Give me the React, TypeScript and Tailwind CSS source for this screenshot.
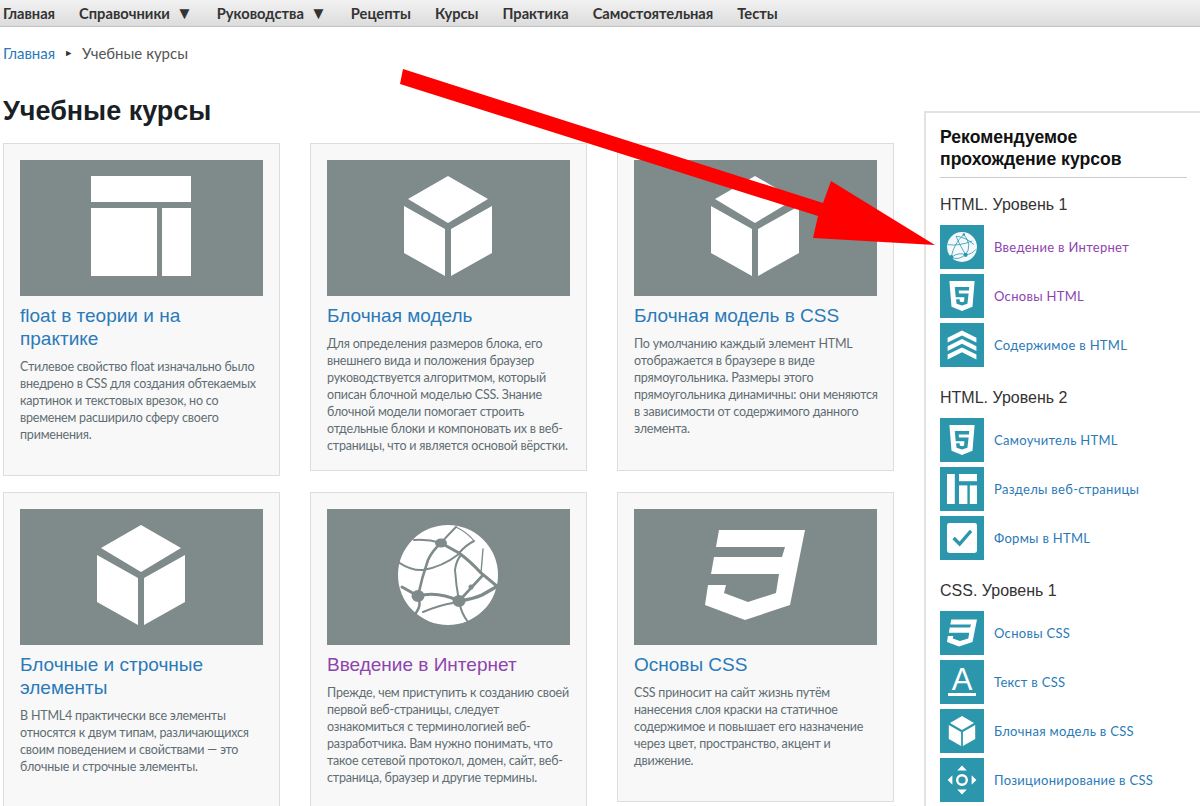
import type { ReactNode } from "react"

const pt = "font-['Lato',sans-serif]"

function Layout() {
  return (
    <svg viewBox="0 0 100 100" className="w-full h-full" fill="#fff">
      <rect x="0" y="0" width="100" height="26" />
      <rect x="0" y="32" width="66" height="68" />
      <rect x="71" y="32" width="29" height="68" />
    </svg>
  )
}

function Cube() {
  return (
    <svg viewBox="0 0 100 100" className="w-full h-full" fill="#fff">
      <polygon points="50,0 90,23 50,47 10,23" />
      <polygon points="6,30 47,53 47,100 6,77" />
      <polygon points="94,30 53,53 53,100 94,77" />
    </svg>
  )
}

function Globe() {
  return (
    <svg viewBox="0 0 100 100" className="w-full h-full">
      <circle cx="50" cy="50" r="50" fill="#fff" />
      <g fill="none" stroke="currentColor" strokeWidth="2" strokeLinecap="round">
        <path d="M16 15 Q30 14 43 18 Q50 10 58 2" />
        <path d="M58 2 Q70 8 76 16" strokeWidth="1.2" />
        <path d="M43 18 L61 28 Q72 36 83 48 L100 62" strokeWidth="3" />
        <path d="M76 16 Q68 20 61 28" />
        <path d="M43 18 Q34 26 30 35 Q24 52 20 71" strokeWidth="2.6" />
        <path d="M0 37 Q14 46 25 45 Q44 42 61 29" />
        <path d="M20 71 L4 62" strokeWidth="3" />
        <path d="M20 71 Q24 80 18 88" strokeWidth="2.6" />
        <path d="M20 71 Q40 66 61 76" strokeWidth="3" />
        <path d="M61 76 Q63 88 70 97" />
        <path d="M61 76 Q75 74 84 70 L98 62" strokeWidth="3.4" />
        <path d="M61 76 Q58 60 57 45 Q58 36 63 30" />
        <path d="M61 76 Q72 64 85 50" strokeWidth="2.6" />
        <path d="M25 87 Q42 80 55 78" />
        <path d="M85 24 Q84 36 83 48" strokeWidth="1.4" />
      </g>
      <g fill="currentColor">
        <ellipse cx="43" cy="18" rx="6" ry="4.5" />
        <ellipse cx="20" cy="71" rx="6.5" ry="6" />
        <ellipse cx="61" cy="76" rx="6.5" ry="6" />
        <circle cx="73" cy="62" r="2.5" />
      </g>
    </svg>
  )
}

function NetGlobe() {
  return (
    <svg viewBox="0 0 100 100" className="w-full h-full">
      <circle cx="50" cy="50" r="50" fill="#fff" fillOpacity="0.95" />
      <g fill="none" stroke="currentColor" strokeWidth="2.6">
        <path d="M14 84 Q22 40 56 8" />
        <path d="M56 8 Q86 44 62 76" />
        <path d="M14 84 Q40 66 62 76 Q84 74 96 58" />
        <path d="M2 42 Q40 48 84 30" />
        <path d="M30 14 Q60 16 90 42" />
        <path d="M62 76 Q40 40 30 14" />
        <path d="M14 84 Q36 96 62 76" />
      </g>
      <g fill="currentColor">
        <circle cx="14" cy="84" r="7" />
        <circle cx="62" cy="76" r="7" />
        <circle cx="56" cy="8" r="4" />
      </g>
    </svg>
  )
}

function Html5() {
  return (
    <svg viewBox="0 0 100 100" className="w-full h-full">
      <path
        fill="#fff"
        fillRule="evenodd"
        d="M8 0H92L85 86L50 100L15 86ZM26 20L29 54H58L57 68L50 71L43 68L42 61H30L32 76L50 82L68 76L72 42H40L39 32H73L74 20Z"
      />
    </svg>
  )
}

function Css3() {
  return (
    <svg viewBox="0 0 100 100" className="w-full h-full" fill="#fff">
      <polygon points="14,5 100,5 85,80 40,95 0,80 3,60 21,60 19,68 43,77 71,68 74,49 6,49 9,32 77,32 80,22 11,22" />
    </svg>
  )
}

function Chevrons() {
  return (
    <svg viewBox="0 0 100 100" className="w-full h-full" fill="#fff">
      <polygon points="50,2 98,26 98,42 50,18 2,42 2,26" />
      <polygon points="50,30 98,54 98,70 50,46 2,70 2,54" />
      <polygon points="50,58 98,82 98,98 50,74 2,98 2,82" />
    </svg>
  )
}

function Sections() {
  return (
    <svg viewBox="0 0 100 100" className="w-full h-full" fill="#fff">
      <rect x="0" y="0" width="26" height="100" />
      <rect x="40" y="0" width="60" height="24" />
      <rect x="40" y="38" width="28" height="62" />
      <rect x="76" y="38" width="24" height="62" />
    </svg>
  )
}

function CheckBox() {
  return (
    <svg viewBox="0 0 100 100" className="w-full h-full">
      <rect x="0" y="0" width="100" height="100" rx="8" fill="#fff" />
      <path d="M22 50L42 70L80 26" fill="none" stroke="currentColor" strokeWidth="11" />
    </svg>
  )
}

function TextIcon() {
  return (
    <div className="w-full h-full flex flex-col items-center">
      <span className="h-[26px] leading-[26px] text-[31px] text-white font-['Liberation_Sans',sans-serif]">A</span>
      <div className="w-[28px] h-[3px] bg-white" />
    </div>
  )
}

function Position() {
  return (
    <svg viewBox="0 0 100 100" className="w-full h-full" fill="#fff">
      <polygon points="50,2 66,18 34,18" />
      <polygon points="50,98 66,82 34,82" />
      <polygon points="2,50 18,34 18,66" />
      <polygon points="98,50 82,34 82,66" />
      <circle cx="50" cy="50" r="16" fill="none" stroke="#fff" strokeWidth="8" />
    </svg>
  )
}

type Course = {
  title: string
  text: string
  icon: ReactNode
  cls: string
  visited?: boolean
}

const rows: Course[][] = [
  [
    {
      title: "float в теории и на\nпрактике",
      text: "Стилевое свойство float изначально было\nвнедрено в CSS для создания обтекаемых\nкартинок и текстовых врезок, но со\nвременем расширило сферу своего\nприменения.",
      icon: <Layout />,
      cls: "h-[333px]",
    },
    {
      title: "Блочная модель",
      text: "Для определения размеров блока, его\nвнешнего вида и положения браузер\nруководствуется алгоритмом, который\nописан блочной моделью CSS. Знание\nблочной модели помогает строить\nотдельные блоки и компоновать их в веб-\nстраницы, что и является основой вёрстки.",
      icon: <Cube />,
      cls: "h-[328px]",
    },
    {
      title: "Блочная модель в CSS",
      text: "По умолчанию каждый элемент HTML\nотображается в браузере в виде\nпрямоугольника. Размеры этого\nпрямоугольника динамичны: они меняются\nв зависимости от содержимого данного\nэлемента.",
      icon: <Cube />,
      cls: "h-[328px]",
    },
  ],
  [
    {
      title: "Блочные и строчные\nэлементы",
      text: "В HTML4 практически все элементы\nотносятся к двум типам, различающихся\nсвоим поведением и свойствами — это\nблочные и строчные элементы.",
      icon: <Cube />,
      cls: "h-[340px]",
    },
    {
      title: "Введение в Интернет",
      text: "Прежде, чем приступить к созданию своей\nпервой веб-страницы, следует\nознакомиться с терминологией веб-\nразработчика. Вам нужно понимать, что\nтакое сетевой протокол, домен, сайт, веб-\nстраница, браузер и другие термины.",
      icon: <Globe />,
      cls: "h-[340px]",
      visited: true,
    },
    {
      title: "Основы CSS",
      text: "CSS приносит на сайт жизнь путём\nнанесения слоя краски на статичное\nсодержимое и повышает его назначение\nчерез цвет, пространство, акцент и\nдвижение.",
      icon: <Css3 />,
      cls: "h-[310px]",
    },
  ],
]

const groups = [
  {
    name: "HTML. Уровень 1",
    items: [
      { label: "Введение в Интернет", icon: <NetGlobe />, visited: true },
      { label: "Основы HTML", icon: <Html5 />, visited: true },
      { label: "Содержимое в HTML", icon: <Chevrons /> },
    ],
  },
  {
    name: "HTML. Уровень 2",
    items: [
      { label: "Самоучитель HTML", icon: <Html5 /> },
      { label: "Разделы веб-страницы", icon: <Sections /> },
      { label: "Формы в HTML", icon: <CheckBox /> },
    ],
  },
  {
    name: "CSS. Уровень 1",
    items: [
      { label: "Основы CSS", icon: <Css3 /> },
      { label: "Текст в CSS", icon: <TextIcon /> },
      { label: "Блочная модель в CSS", icon: <Cube /> },
      { label: "Позиционирование в CSS", icon: <Position /> },
    ],
  },
]

function Card({ course }: { course: Course }) {
  return (
    <a className={`block w-[277px] shrink-0 border border-[#ddd] bg-[#f8f8f8] px-4 pt-4 ${course.cls}`}>
      <div className="h-[136px] pb-[4px] pr-[1px] bg-[#7f8a8a] text-[#7f8a8a] flex items-center justify-center">
        <div className="w-[100px] h-[100px]">{course.icon}</div>
      </div>
      <h3
        className={`mt-2 text-[19px] leading-[23px] whitespace-pre-line font-['Liberation_Sans',sans-serif] ${
          course.visited ? "text-[#8e44ad]" : "text-[#2a7ab8]"
        }`}
      >
        {course.title}
      </h3>
      <p className={`mt-2 text-[12.5px] tracking-[-0.2px] leading-[17px] text-[#5f6d73] whitespace-pre ${pt}`}>
        {course.text}
      </p>
    </a>
  )
}

function Caret() {
  return <span className="ml-[6px] text-[17px] leading-none text-[#333]">▼</span>
}

export default function App() {
  return (
    <div className="relative w-[1200px] h-[806px] overflow-hidden bg-white">
      <nav
        className={`h-[27px] pl-[3px] flex items-center gap-6 bg-gradient-to-b from-[#f2f2f2] to-[#dcdcdc] border-b border-[#c4c4c4] text-[14.7px] font-bold text-[#333] ${pt}`}
      >
        <a>Главная</a>
        <a className="flex items-center">
          Справочники
          <Caret />
        </a>
        <a className="flex items-center">
          Руководства
          <Caret />
        </a>
        <a>Рецепты</a>
        <a>Курсы</a>
        <a>Практика</a>
        <a>Самостоятельная</a>
        <a>Тесты</a>
      </nav>

      <div className="flex items-start">
        <main className="w-[924px] shrink-0 pl-[3px]">
          <div className={`mt-[17px] h-[18px] flex items-center text-[15px] text-[#555] ${pt}`}>
            <a className="text-[#2a7ab8]">Главная</a>
            <span className="ml-[9px] mr-[9px] text-[9px] text-[#333]">►</span>
            <span>Учебные курсы</span>
          </div>
          <h1 className="mt-[31px] h-[36px] leading-[36px] text-[27px] font-bold text-[#1a1f26] font-['Liberation_Sans',sans-serif]">
            Учебные курсы
          </h1>
          <div className="mt-[14px] flex flex-col gap-[16px]">
            {rows.map((row, i) => (
              <div key={i} className="flex items-start gap-[30px]">
                {row.map((c) => (
                  <Card key={c.title} course={c} />
                ))}
              </div>
            ))}
          </div>
        </main>

        <aside className="mt-[84px] flex-1 h-[800px] border-l-2 border-t-2 border-[#e2e2e2] pl-[14px] pr-[13px] pt-[13px]">
          <h2 className="text-[17.6px] leading-[22px] font-bold text-[#111] pb-[7px] border-b border-[#ccc] font-['Liberation_Sans',sans-serif]">
            Рекомендуемое
            <br />
            прохождение курсов
          </h2>
          {groups.map((g) => (
            <section key={g.name} className="mt-[17px] mb-[21px]">
              <h4 className="h-[20px] leading-[20px] mb-[10px] text-[16px] text-[#333] font-['Liberation_Sans',sans-serif]">
                {g.name}
              </h4>
              <ul className="flex flex-col gap-[5px]">
                {g.items.map((it) => (
                  <li key={it.label} className="flex items-center gap-[10px]">
                    <div className="w-[44px] h-[44px] shrink-0 bg-[#2b96ac] text-[#2b96ac] flex items-center justify-center">
                      <div className="w-[30px] h-[30px]">{it.icon}</div>
                    </div>
                    <a
                      className={`mt-[2px] text-[13px] tracking-[0.3px] whitespace-nowrap ${pt} ${
                        it.visited ? "text-[#8e44ad]" : "text-[#2a7ab8]"
                      }`}
                    >
                      {it.label}
                    </a>
                  </li>
                ))}
              </ul>
            </section>
          ))}
        </aside>
      </div>

      {/* red arrow drawn over the page */}
      <svg className="absolute inset-0 pointer-events-none" width="1200" height="806" viewBox="0 0 1200 806">
        <polygon points="403,69 823,203 831,181 935,245 813,238 818,216 400,84" fill="#ff0000" />
      </svg>
    </div>
  )
}
